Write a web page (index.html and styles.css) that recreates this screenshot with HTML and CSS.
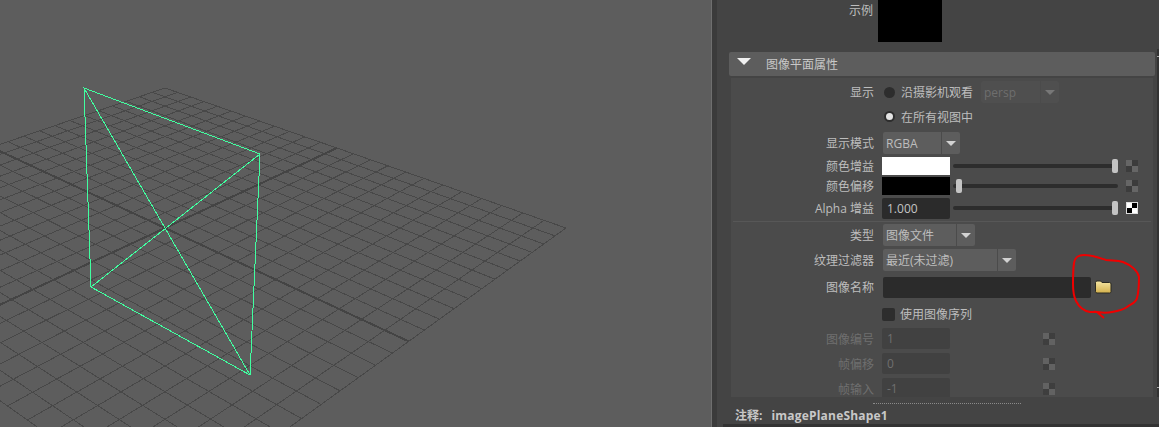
FILE: index.html
```html
<!DOCTYPE html>
<html lang="zh">
<head>
<meta charset="utf-8">
<title>图像平面属性</title>
<link rel="stylesheet" href="styles.css">
</head>
<body>
<div class="app">
  <div class="viewport">
    <svg class="scene" viewBox="0 0 711 427" width="711" height="427">
      <g id="grid" class="grid"></g>
      <g class="wire">
        <polygon points="84,88 260,154 250,375 91,287"/>
        <line x1="84" y1="88" x2="250" y2="375"/>
        <line x1="260" y1="154" x2="91" y2="287"/>
      </g>
    </svg>
  </div>
  <div class="sash"></div>
  <div class="panel">
    <div class="sample">
      <span class="label">示例</span>
      <div class="swatch-big"></div>
    </div>
    <div class="section-head"><span class="tri"></span><span class="head-text">图像平面属性</span></div>
    <div class="section-body">
      <div class="row h24">
        <span class="label">显示</span>
        <span class="radio"></span><span class="radio-text">沿摄影机观看</span>
        <div class="combo off persp"><span class="combo-text">persp</span><span class="combo-arrow"></span></div>
      </div>
      <div class="row h25">
        <span class="label"></span>
        <span class="radio on"></span><span class="radio-text">在所有视图中</span>
      </div>
      <div class="row h27">
        <span class="label">显示模式</span>
        <div class="combo w77"><span class="combo-text">RGBA</span><span class="combo-arrow"></span></div>
      </div>
      <div class="row h20">
        <span class="label">颜色增益</span>
        <div class="color white"></div>
        <div class="slider"><span class="thumb end"></span></div>
        <span class="map"></span>
      </div>
      <div class="row h19">
        <span class="label">颜色偏移</span>
        <div class="color black"></div>
        <div class="slider"><span class="thumb"></span></div>
        <span class="map"></span>
      </div>
      <div class="row h26">
        <span class="label">Alpha 增益</span>
        <div class="field w68">1.000</div>
        <div class="slider"><span class="thumb end"></span></div>
        <span class="map bw"></span>
      </div>
      <div class="divider"></div>
      <div class="row h26">
        <span class="label">类型</span>
        <div class="combo w92"><span class="combo-text">图像文件</span><span class="combo-arrow"></span></div>
      </div>
      <div class="row h24">
        <span class="label">纹理过滤器</span>
        <div class="combo w133"><span class="combo-text">最近(未过滤)</span><span class="combo-arrow"></span></div>
      </div>
      <div class="row h30">
        <span class="label">图像名称</span>
        <div class="field w208"></div>
        <svg class="folder" width="18" height="14" viewBox="0 0 18 14">
          <defs><linearGradient id="fg" x1="0" y1="0" x2="0" y2="1"><stop offset="0" stop-color="#f6e6a4"/><stop offset="1" stop-color="#d3b04c"/></linearGradient></defs>
          <path d="M1.5 2.5 Q1.5 1 3 1 H6.5 L8 2.5 H15.5 Q17 2.5 17 4 V11.5 Q17 13 15.5 13 H3 Q1.5 13 1.5 11.5 Z" fill="url(#fg)" stroke="#2a2a22" stroke-width="1"/>
        </svg>
      </div>
      <div class="row h24">
        <span class="label"></span>
        <span class="check"></span><span class="check-text">使用图像序列</span>
      </div>
      <div class="row h25 dim">
        <span class="label">图像编号</span>
        <div class="field w68">1</div>
        <span class="map far"></span>
      </div>
      <div class="row h25 dim">
        <span class="label">帧偏移</span>
        <div class="field w68">0</div>
        <span class="map far"></span>
      </div>
      <div class="row h25 dim">
        <span class="label">帧输入</span>
        <div class="field w68">-1</div>
        <span class="map far"></span>
      </div>
    </div>
    <div class="grip"></div>
    <div class="notes"><b>注释:</b><b class="notes-name">imagePlaneShape1</b></div>
    <div class="bottom-bar"></div>
    <div class="scrollbar"></div>
  </div>
</div>
<svg class="scribble" width="1159" height="427" viewBox="0 0 1159 427">
  <path d="M1104 318 L1097 312 C1103 313 1108 313 1112 312 C1118 311 1123 310 1127 307 C1131 304 1136 303 1137 298 C1139 291 1139 284 1139 277 C1138 271 1131 265 1123 262 C1117 260 1112 261 1106 260 C1100 258 1092 255 1084 255 C1078 255 1075 257 1074 263 C1073 270 1073 278 1073 284 C1073 291 1074 297 1076 301 C1079 307 1084 311 1090 312 L1097 312"/>
</svg>
<script src="grid.js"></script>
</body>
</html>
```
FILE: styles.css
```css
html, body { margin: 0; padding: 0; height: 100%; overflow: hidden; background: #444; }
body, .panel { font: 12px/16px "Open Sans", "Noto Sans CJK SC", sans-serif; color: #bdbdbd; }
.app { display: flex; width: 1159px; height: 427px; }
.viewport { width: 711px; flex: none; background: #5d5d5d; }
.scene { display: block; shape-rendering: crispEdges; }
.grid line { stroke: #484848; stroke-width: 1; }
.grid line.axis { stroke: #444; stroke-width: 2; }
.wire polygon, .wire line { fill: none; stroke: #40ffa0; stroke-width: 1; }
.sash { width: 6px; flex: none; background: #3b3b3b; border-left: 1px solid #6f6f6f; box-sizing: border-box; }
.panel { flex: 1; min-width: 0; display: flex; flex-direction: column; background: #444; padding-left: 12px; position: relative; }
.sample { height: 52px; flex: none; display: flex; align-items: flex-start; }
.sample .label { width: 144px; padding-top: 3px; }
.sample .swatch-big { margin-left: 5px; }
.swatch-big { width: 64px; height: 42px; background: #000; }
.section-head { height: 24px; flex: none; margin-right: 4px; background: #5d5d5d; border-radius: 2px; display: flex; align-items: center; color: #c8c8c8; }
.head-text { padding-top: 2px; }
.tri { width: 0; height: 0; margin: -6px 15px 0 8px; border-left: 7px solid transparent; border-right: 7px solid transparent; border-top: 7px solid #f0f0f0; }
.section-body { flex: 1; min-height: 0; overflow: hidden; margin: 2px 6px 0 2px; background: #4b4b4b; padding-top: 2px; }
.row { display: flex; align-items: center; }
.h19 { height: 19px; } .h20 { height: 20px; } .h24 { height: 24px; } .h25 { height: 25px; }
.h26 { height: 26px; } .h27 { height: 27px; } .h30 { height: 30px; }
.label { width: 143px; flex: none; text-align: right; padding-top: 2px; box-sizing: border-box; min-height: 18px; }
.row > .field, .row > .color { margin-left: 8px; flex: none; }
.row > .combo, .row > .w208 { margin-left: 9px; flex: none; }
.radio { width: 11px; height: 11px; margin-left: 10px; border-radius: 50%; background: #2d2d2d; flex: none; box-sizing: border-box; }
.radio.on { background: #e4e4e4; border: 2px solid #2d2d2d; }
.radio-text { margin-left: 6px; white-space: nowrap; padding-top: 2px; }
.combo { height: 22px; display: flex; background: #5d5d5d; border-radius: 2px; overflow: hidden; box-sizing: border-box; }
.combo-text { flex: 1; min-width: 0; padding-left: 3px; line-height: 24px; white-space: nowrap; border-right: 1px solid #4b4b4b; }
.combo-arrow { width: 18px; flex: none; position: relative; }
.combo-arrow::after { content: ""; position: absolute; left: 4px; top: 9px; border-left: 5px solid transparent; border-right: 5px solid transparent; border-top: 5px solid #d2d2d2; }
.w77 { width: 77px; } .w92 { width: 92px; } .w133 { width: 133px; }
.combo.off { background: #4f4f4f; color: #6e6e6e; }
.combo.off .combo-arrow::after { border-top-color: #777; }
.row > .persp { margin-left: 8px; width: 78px; }
.color { width: 68px; height: 18px; }
.white { background: #fff; } .black { background: #000; }
.field { height: 21px; background: #2b2b2b; border-radius: 2px; padding-left: 5px; line-height: 21px; box-sizing: border-box; color: #c4c4c4; }
.w68 { width: 68px; } .w208 { width: 208px; }
.slider { width: 165px; height: 4px; margin-left: 3px; background: #2d2d2d; border-radius: 2px; position: relative; flex: none; }
.thumb { position: absolute; left: 3px; top: -5px; width: 6px; height: 14px; border-radius: 2px; background: #c4c4c4; }
.thumb.end { left: auto; right: 0; }
.map { width: 12px; height: 12px; margin-left: 8px; flex: none; background: conic-gradient(#3c3c3c 25%, #666 0 50%, #3c3c3c 0 75%, #666 0); }
.map.bw { background: conic-gradient(#000 25%, #fff 0 50%, #000 0 75%, #fff 0); outline: 1px solid #ddd; outline-offset: -1px; }
.map.far { margin-left: 93px; opacity: .85; }
.divider { height: 1px; background: #575757; margin: 0 2px; }
.folder { margin-left: 3px; flex: none; }
.check { width: 13px; height: 13px; margin-left: 8px; background: #2d2d2d; border-radius: 2px; flex: none; }
.check-text { margin-left: 5px; padding-top: 2px; }
.dim { color: #6f6f6f; }
.dim .field { background: #414141; color: #6f6f6f; }
.grip { height: 0; flex: none; margin: 6px 0 0 144px; width: 148px; border-top: 1px dotted #8a8a8a; }
.notes { height: 19px; flex: none; margin: 1px 0 0 6px; padding-top: 2px; box-sizing: border-box; display: flex; gap: 9px; align-items: center; color: #c8c8c8; }
.notes-name { letter-spacing: .2px; }
.bottom-bar { height: 3px; flex: none; margin-left: -6px; background: #333; }
.scrollbar { position: absolute; right: 0; top: 49px; bottom: 30px; width: 2px; background: #333; }
.scrollbar::before, .scrollbar::after { content: ""; position: absolute; left: 0; width: 2px; height: 1px; background: #aaa; }
.scrollbar::before { top: 7px; }
.scrollbar::after { bottom: 9px; }
.scribble { position: absolute; left: 0; top: 0; pointer-events: none; }
.scribble path { fill: none; stroke: #f00000; stroke-width: 2; }
```
FILE: grid.js
```js
// Draws the ground-plane grid by projecting a 24x24 unit square through its four screen corners.
(function () {
  var F = [165, 88], R = [566, 228], N = [165, 517], L = [-245, 228];
  var dx1 = R[0] - N[0], dx2 = L[0] - N[0], sx = F[0] - R[0] + N[0] - L[0];
  var dy1 = R[1] - N[1], dy2 = L[1] - N[1], sy = F[1] - R[1] + N[1] - L[1];
  var den = dx1 * dy2 - dx2 * dy1;
  var g = (sx * dy2 - dx2 * sy) / den;
  var h = (dx1 * sy - sx * dy1) / den;
  var a = R[0] - F[0] + g * R[0], b = L[0] - F[0] + h * L[0], c = F[0];
  var d = R[1] - F[1] + g * R[1], e = L[1] - F[1] + h * L[1], f = F[1];
  function project(u, v) {
    var w = g * u + h * v + 1;
    return [(a * u + b * v + c) / w, (d * u + e * v + f) / w];
  }
  var group = document.getElementById('grid');
  function add(p, q, axis) {
    var el = document.createElementNS('http://www.w3.org/2000/svg', 'line');
    el.setAttribute('x1', p[0]); el.setAttribute('y1', p[1]);
    el.setAttribute('x2', q[0]); el.setAttribute('y2', q[1]);
    if (axis) el.setAttribute('class', 'axis');
    group.appendChild(el);
  }
  var n = 24;
  for (var i = 0; i <= n; i++) {
    var t = i / n, axis = i === n / 2;
    add(project(t, 0), project(t, 1), axis);
    add(project(0, t), project(1, t), axis);
  }
})();
```
